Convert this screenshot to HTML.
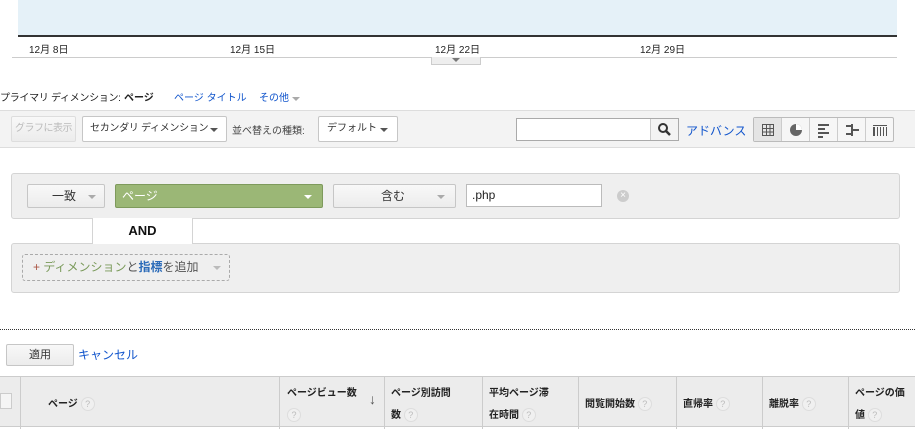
<!DOCTYPE html>
<html><head><meta charset="utf-8"><style>
*{box-sizing:border-box;margin:0;padding:0}
body{width:915px;height:429px;overflow:hidden;background:#fff;font-family:"Liberation Sans","Noto Sans CJK JP",sans-serif;font-size:11px;color:#222;position:relative}
.a{position:absolute;white-space:nowrap}
.btn{position:absolute;white-space:nowrap;border:1px solid #c6c6c6;border-radius:2px;background:linear-gradient(#f8f8f8,#ececec);font-size:11px;color:#333;line-height:22px;overflow:hidden}
.tri{display:inline-block;width:0;height:0;border-left:4px solid transparent;border-right:4px solid transparent;border-top:4px solid #555}
.q{display:inline-block;width:14px;height:14px;border-radius:7px;background:#f0f0f0;border:1px solid #ddd;color:#bbb;font-size:9px;text-align:center;line-height:12px;font-weight:normal;vertical-align:middle}
</style></head><body>
<div class="a" style="left:18px;top:0;width:879px;height:36px;background:#e5f1f8"></div>
<div class="a" style="left:18px;top:35px;width:879px;height:2px;background:#333"></div>
<div class="a" style="left:29px;top:41px;font-size:10px">12月 8日</div>
<div class="a" style="left:230px;top:41px;font-size:10px">12月 15日</div>
<div class="a" style="left:435px;top:41px;font-size:10px">12月 22日</div>
<div class="a" style="left:640px;top:41px;font-size:10px">12月 29日</div>
<div class="a" style="left:12px;top:57px;width:885px;height:1px;background:#ccc"></div>
<div class="a" style="left:431px;top:57px;width:50px;height:8px;border:1px solid #ccc;border-top:0;background:#eee;text-align:center;line-height:4px"><span class="tri" style="border-top-color:#777"></span></div>
<div class="a" style="left:0;top:89px;font-size:10px;letter-spacing:-0.3px">プライマリ ディメンション:</div>
<div class="a" style="left:124px;top:89px;font-size:10px;font-weight:bold">ページ</div>
<div class="a" style="left:174px;top:89px;color:#15c;font-size:10px">ページ タイトル</div>
<div class="a" style="left:259px;top:89px;color:#15c;font-size:10px">その他 <span class="tri" style="border-top-color:#aaa"></span></div>
<div class="a" style="left:0;top:110px;width:915px;height:38px;background:#f3f3f3;border-top:1px solid #ddd;border-bottom:1px solid #ddd"></div>
<div class="btn" style="left:11px;top:116px;width:65px;height:26px;color:#bbb;text-align:center;line-height:24px;border-color:#ddd;font-size:10px;letter-spacing:-0.5px">グラフに表示</div>
<div class="btn" style="left:82px;top:116px;width:145px;height:26px;line-height:24px;padding-left:7px;background:#fff;font-size:10px;letter-spacing:-0.3px">セカンダリ ディメンション<span class="tri" style="position:absolute;right:8px;top:11px"></span></div>
<div class="a" style="left:232px;top:122px;color:#444;font-size:10px">並べ替えの種類:</div>
<div class="btn" style="left:318px;top:116px;width:80px;height:26px;line-height:24px;padding-left:8px;background:#fff;font-size:10px">デフォルト<span class="tri" style="position:absolute;right:9px;top:11px"></span></div>
<div class="a" style="left:516px;top:118px;width:163px;height:23px;border:1px solid #aaa;background:#fff"></div>
<div class="a" style="left:650px;top:119px;width:28px;height:21px;border-left:1px solid #ccc;background:#f3f3f3"><svg width="28" height="21"><circle cx="12" cy="9" r="4" fill="none" stroke="#333" stroke-width="2"/><line x1="15" y1="12" x2="19" y2="16" stroke="#333" stroke-width="2.5"/></svg></div>
<div class="a" style="left:686px;top:122px;color:#15c;font-size:12px">アドバンス</div>
<div class="a" style="left:753px;top:117px;width:141px;height:25px;border:1px solid #bbb;border-radius:2px;background:#f6f6f6;display:flex">
<div style="width:28px;border-right:1px solid #ccc;background:#e4e4e4"><svg width="28" height="23"><g stroke="#555" fill="none"><rect x="8.5" y="6.5" width="11" height="11"/><line x1="12.5" y1="6" x2="12.5" y2="18"/><line x1="16" y1="6" x2="16" y2="18"/><line x1="8" y1="10.5" x2="20" y2="10.5"/><line x1="8" y1="14" x2="20" y2="14"/></g></svg></div>
<div style="width:28px;border-right:1px solid #ccc"><svg width="28" height="23"><circle cx="14" cy="12" r="6" fill="#666"/><path d="M14 12V6A6 6 0 0 1 20 12Z" fill="#fff"/></svg></div>
<div style="width:28px;border-right:1px solid #ccc"><svg width="28" height="23"><g fill="#555"><rect x="8" y="6" width="11" height="2"/><rect x="8" y="10" width="7" height="2"/><rect x="8" y="14" width="11" height="2"/><rect x="8" y="18" width="5" height="2"/></g></svg></div>
<div style="width:28px;border-right:1px solid #ccc"><svg width="28" height="23"><g fill="#555"><rect x="8" y="7" width="6" height="2"/><rect x="13" y="11" width="8" height="2"/><rect x="8" y="15" width="6" height="2"/><rect x="13" y="6" width="2" height="12"/></g></svg></div>
<div style="width:28px"><svg width="28" height="23"><g fill="#555"><rect x="7" y="7" width="14" height="1"/><rect x="7" y="9" width="2" height="9"/><rect x="11" y="9" width="1" height="9"/><rect x="14" y="9" width="1" height="9"/><rect x="17" y="9" width="1" height="9"/><rect x="20" y="9" width="1" height="9"/></g></svg></div>
</div>
<div class="a" style="left:11px;top:173px;width:889px;height:46px;background:#efefef;border:1px solid #d4d4d4;border-radius:3px"></div>
<div class="a" style="left:11px;top:243px;width:889px;height:50px;background:#efefef;border:1px solid #d4d4d4;border-radius:3px"></div>
<div class="a" style="left:92px;top:218px;width:101px;height:26px;background:#fff;border-left:1px solid #d4d4d4;border-right:1px solid #d4d4d4;text-align:center;font-weight:bold;font-size:13px;line-height:26px;color:#111">AND</div>
<div class="btn" style="left:27px;top:184px;width:78px;height:24px;text-align:right;padding-right:28px;font-size:12px">一致<span class="tri" style="position:absolute;right:8px;top:10px;border-top-color:#aaa"></span></div>
<div class="btn" style="left:115px;top:184px;width:208px;height:24px;background:#9bb776;border-color:#7e9a5c;color:#fff;padding-left:6px;font-size:12px">ページ<span class="tri" style="position:absolute;right:10px;top:10px;border-top-color:#fff"></span></div>
<div class="btn" style="left:333px;top:184px;width:123px;height:24px;text-align:right;padding-right:50px;font-size:12px">含む<span class="tri" style="position:absolute;right:10px;top:10px;border-top-color:#aaa"></span></div>
<div class="a" style="left:466px;top:184px;width:136px;height:23px;border:1px solid #bbb;background:#fff;padding-left:5px;line-height:21px;font-size:12px">.php</div>
<div class="a" style="left:617px;top:190px;width:12px;height:12px;border-radius:6px;background:#ccc;color:#fff;font-size:10px;line-height:12px;text-align:center">×</div>
<div class="a" style="left:22px;top:254px;width:208px;height:27px;border:1px dashed #aaa;border-radius:3px;line-height:25px;padding-left:10px;font-size:12px;color:#7a9a5a"><span style="color:#a54">+</span> ディメンション<span style="color:#555">と</span><b style="color:#2a6ab8">指標</b><span style="color:#555">を追加</span><span class="tri" style="position:absolute;right:8px;top:11px;border-top-color:#bbb"></span></div>
<div class="a" style="left:0;top:329px;width:915px;border-top:1px dotted #333"></div>
<div class="btn" style="left:6px;top:344px;width:68px;height:22px;text-align:center;line-height:20px">適用</div>
<div class="a" style="left:78px;top:346px;color:#15c;font-size:12px">キャンセル</div>
<div class="a" style="left:0;top:376px;width:915px;height:53px;background:#ececec;border-top:1px solid #ccc"></div>
<div class="a" style="left:0;top:426px;width:915px;height:3px;background:#fff;border-top:1px solid #ccc"></div>
<div class="a" style="left:0;top:393px;width:12px;height:16px;border:1px solid #ccc;background:#f5f5f5"></div>
<div class="a" style="left:20px;top:377px;width:1px;height:52px;background:#ccc"></div>
<div class="a" style="left:279px;top:377px;width:1px;height:52px;background:#ccc"></div>
<div class="a" style="left:384px;top:377px;width:1px;height:52px;background:#ccc"></div>
<div class="a" style="left:482px;top:377px;width:1px;height:52px;background:#ccc"></div>
<div class="a" style="left:578px;top:377px;width:1px;height:52px;background:#ccc"></div>
<div class="a" style="left:676px;top:377px;width:1px;height:52px;background:#ccc"></div>
<div class="a" style="left:762px;top:377px;width:1px;height:52px;background:#ccc"></div>
<div class="a" style="left:848px;top:377px;width:1px;height:52px;background:#ccc"></div>
<div class="a" style="left:48px;top:395px;font-weight:bold;font-size:10px">ページ <span class="q">?</span></div>
<div class="a" style="left:287px;top:383px;font-weight:bold;font-size:10px;line-height:22px">ページビュー数<br><span class="q">?</span></div>
<div class="a" style="left:369px;top:391px;color:#555;font-size:14px">↓</div>
<div class="a" style="left:391px;top:383px;font-weight:bold;font-size:10px;line-height:22px">ページ別訪問<br>数 <span class="q">?</span></div>
<div class="a" style="left:489px;top:383px;font-weight:bold;font-size:10px;line-height:22px">平均ページ滞<br>在時間 <span class="q">?</span></div>
<div class="a" style="left:585px;top:395px;font-weight:bold;font-size:10px">閲覧開始数 <span class="q">?</span></div>
<div class="a" style="left:683px;top:395px;font-weight:bold;font-size:10px">直帰率 <span class="q">?</span></div>
<div class="a" style="left:769px;top:395px;font-weight:bold;font-size:10px">離脱率 <span class="q">?</span></div>
<div class="a" style="left:855px;top:383px;font-weight:bold;font-size:10px;line-height:22px">ページの価<br>値 <span class="q">?</span></div>
</body></html>
